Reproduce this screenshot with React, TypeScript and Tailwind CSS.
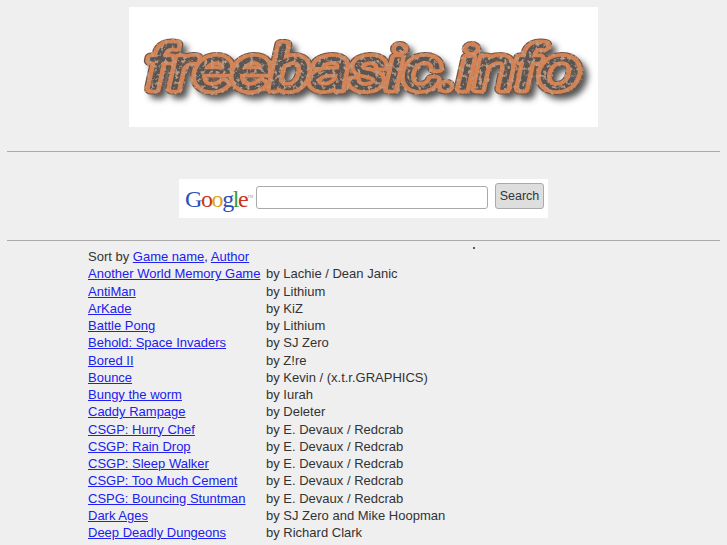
const games: [string, string][] = [
  ["Another World Memory Game", "by Lachie / Dean Janic"],
  ["AntiMan", "by Lithium"],
  ["ArKade", "by KiZ"],
  ["Battle Pong", "by Lithium"],
  ["Behold: Space Invaders", "by SJ Zero"],
  ["Bored II", "by Z!re"],
  ["Bounce", "by Kevin / (x.t.r.GRAPHICS)"],
  ["Bungy the worm", "by Iurah"],
  ["Caddy Rampage", "by Deleter"],
  ["CSGP: Hurry Chef", "by E. Devaux / Redcrab"],
  ["CSGP: Rain Drop", "by E. Devaux / Redcrab"],
  ["CSGP: Sleep Walker", "by E. Devaux / Redcrab"],
  ["CSGP: Too Much Cement", "by E. Devaux / Redcrab"],
  ["CSPG: Bouncing Stuntman", "by E. Devaux / Redcrab"],
  ["Dark Ages", "by SJ Zero and Mike Hoopman"],
  ["Deep Deadly Dungeons", "by Richard Clark"],
  ["Deep Deadly Dungeons 2", "by Richard Clark"],
];

function Logo() {
  const text = {
    x: 17,
    y: 82,
    fontFamily: "Roboto, sans-serif",
    fontWeight: 300,
    fontStyle: "italic",
    fontSize: 60,
    textLength: 434,
    lengthAdjust: "spacingAndGlyphs" as const,
    strokeLinejoin: "round" as const,
    strokeLinecap: "round" as const,
  };
  return (
    <svg width="469" height="120" viewBox="0 0 469 120">
      <defs>
        <filter id="shadow" x="-5%" y="-20%" width="110%" height="140%">
          <feGaussianBlur stdDeviation="3" />
        </filter>
        <filter id="rust" x="-5%" y="-20%" width="110%" height="140%">
          <feTurbulence type="fractalNoise" baseFrequency="0.28" numOctaves="3" seed="4" result="noise" />
          <feColorMatrix in="noise" type="matrix" values="0 0 0 0 0.5  0 0 0 0 0.32  0 0 0 0 0.23  0 0 0 5 -2.6" result="spots" />
          <feComposite in="spots" in2="SourceAlpha" operator="in" result="clipped" />
          <feMerge result="merged">
            <feMergeNode in="SourceGraphic" />
            <feMergeNode in="clipped" />
          </feMerge>
          <feGaussianBlur in="merged" stdDeviation="0.6" />
        </filter>
      </defs>
      <text {...text} dx="5" dy="5" fill="#555" stroke="#555" strokeWidth="10" filter="url(#shadow)">freebasic.info</text>
      <g filter="url(#rust)">
        <text {...text} fill="#6e5344" stroke="#6e5344" strokeWidth="11">freebasic.info</text>
        <text {...text} fill="#d58252" stroke="#d58252" strokeWidth="9">freebasic.info</text>
        <text {...text} fill="#5a5653" stroke="#5a5653" strokeWidth="1.6">freebasic.info</text>
      </g>
    </svg>
  );
}

export default function App() {
  return (
    <div className="relative h-[545px] overflow-hidden bg-[#efefef] font-['Liberation_Sans',sans-serif] text-[13px] leading-[15px] text-[#333]">
      <div className="pt-[7px] flex justify-center">
        <div className="w-[469px] h-[120px] bg-white">
          <Logo />
        </div>
      </div>
      <hr className="mx-[7px] mt-6 border-t border-[#aaa]" />
      <div className="mt-[27px] flex justify-center">
        <div className="w-[369px] h-[39px] bg-white flex items-start pl-[6px]">
          <span className="mt-[8px] w-[70px] font-['Liberation_Serif',serif] text-[24px] leading-[24px] tracking-[-1.4px] whitespace-nowrap">
            <span className="text-[#2a4fb8]">G</span>
            <span className="text-[#c8351f]">o</span>
            <span className="text-[#d9a520]">o</span>
            <span className="text-[#2a4fb8]">g</span>
            <span className="text-[#3a9a3a]">l</span>
            <span className="text-[#c8351f]">e</span>
            <span className="align-super text-[4px] leading-none tracking-normal text-[#999]">TM</span>
          </span>
          <input className="mt-[7px] ml-[1px] w-[232px] h-[23px] bg-white border border-[#aaa] rounded-[3px]" />
          <button className="mt-1 ml-[7px] w-[49px] h-[26px] bg-[#dedede] border border-[#aaa] rounded-[3px] text-[12.5px] text-[#333]">Search</button>
        </div>
      </div>
      <hr className="mx-[7px] mt-[22px] border-t border-[#aaa]" />
      <span className="absolute left-[473px] top-[247px] w-[2px] h-[2px] bg-[#555]" />
      <div className="ml-[88px] mt-2">
        <div className="h-[17.25px]">
          Sort by <a href="#" className="text-[#2020f0] underline">Game name</a>, <a href="#" className="text-[#2020f0] underline">Author</a>
        </div>
        {games.map(([name, author]) => (
          <div key={name} className="flex h-[17.25px]">
            <a href="#" className="w-[178px] shrink-0 text-[#2020f0] underline whitespace-nowrap">{name}</a>
            <span className="whitespace-nowrap">{author}</span>
          </div>
        ))}
      </div>
    </div>
  );
}
